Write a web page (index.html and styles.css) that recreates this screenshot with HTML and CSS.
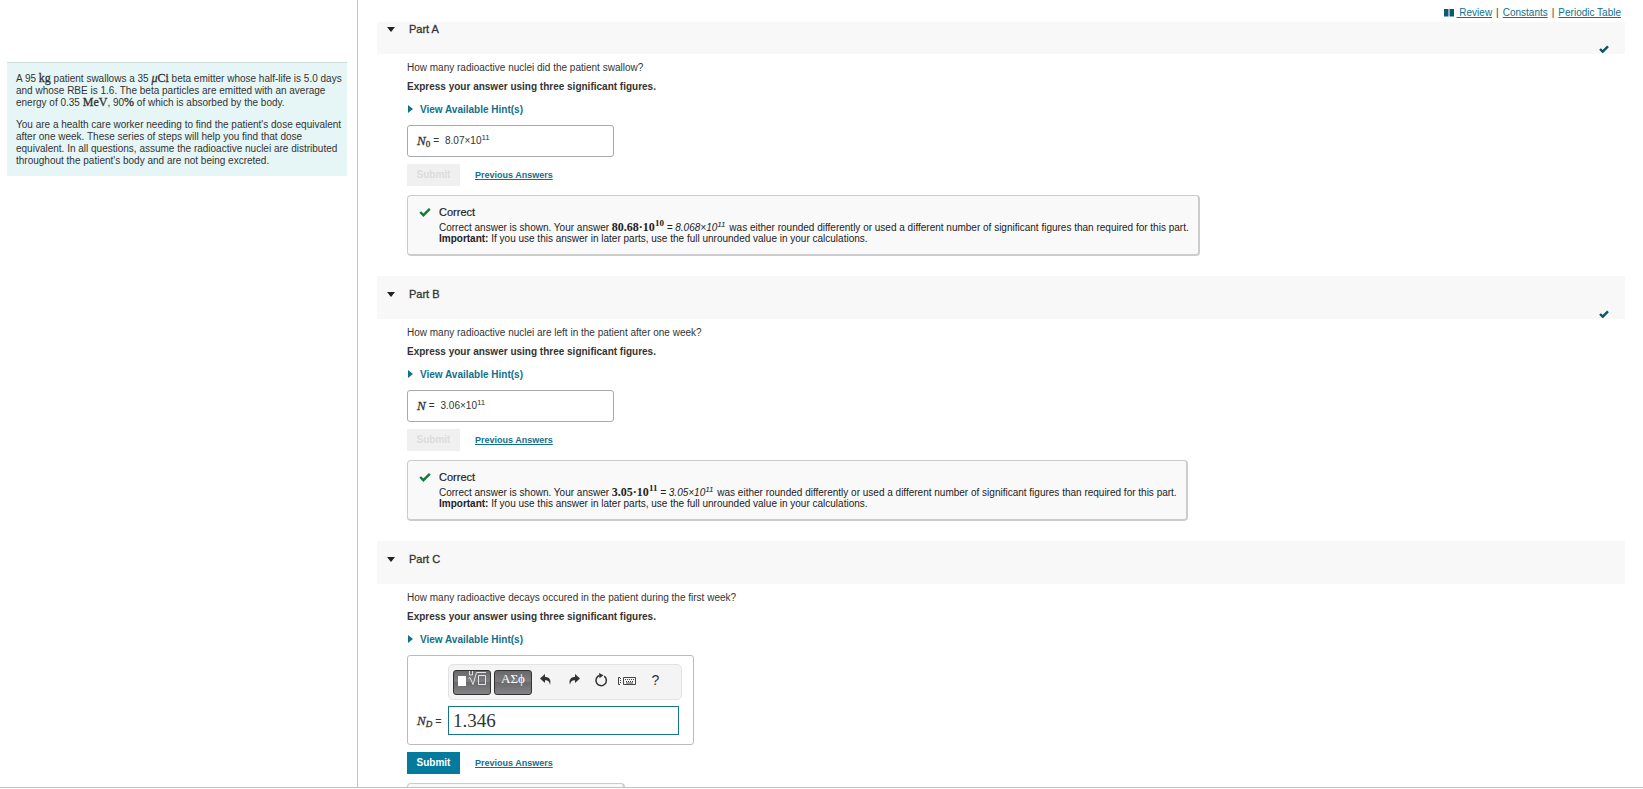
FILE: index.html
```html
<!DOCTYPE html>
<html lang="en">
<head>
<meta charset="utf-8">
<title>Beta emitter dose</title>
<link rel="stylesheet" href="styles.css">
</head>
<body>
<div class="workspace">
  <aside class="sidebar">
    <div class="problem">
      <p>A 95 <span class="math">kg</span> patient swallows a 35 <span class="math"><i>μ</i>Ci</span> beta emitter whose half-life is 5.0 days and whose RBE is 1.6. The beta particles are emitted with an average energy of 0.35 <span class="math">MeV</span>, 90<span class="math">%</span> of which is absorbed by the body.</p>
      <p>You are a health care worker needing to find the patient's dose equivalent after one week. These series of steps will help you find that dose equivalent. In all questions, assume the radioactive nuclei are distributed throughout the patient's body and are not being excreted.</p>
    </div>
  </aside>
  <main class="main">
    <nav class="resources">
      <svg class="book" viewBox="0 0 10 8" aria-hidden="true"><path d="M0 0h4.5v7.5H0zM5.5 0H10v7.5H5.5z"/></svg><a href="#review">&nbsp;Review</a><span class="bar">|</span><a href="#constants">Constants</a><span class="bar">|</span><a href="#table">Periodic Table</a>
    </nav>

    <section class="part">
      <header class="part-head first">
        <svg class="caret" viewBox="0 0 8 5" aria-hidden="true"><path d="M0 0h8L4 5z"/></svg>
        <h2>Part A</h2>
        <svg class="done" viewBox="0 0 10 8" aria-label="Complete"><path d="M1 4l2.7 2.7L9 1.4"/></svg>
      </header>
      <div class="part-body">
        <p class="question">How many radioactive nuclei did the patient swallow?</p>
        <p class="express">Express your answer using three significant figures.</p>
        <button class="hints" type="button"><svg viewBox="0 0 5 8" aria-hidden="true"><path d="M0 0l5 4-5 4z"/></svg>View Available Hint(s)</button>
        <div class="answer"><span class="var"><i>N</i><sub>0</sub></span><span class="eq">=</span><span>8.07×10<sup>11</sup></span></div>
        <div class="actions"><button class="submit" type="button" disabled>Submit</button><a href="#previous-a">Previous Answers</a></div>
        <div class="feedback">
          <svg class="tick" viewBox="0 0 12 10" aria-hidden="true"><path d="M1.2 5l3.2 3.2 6.4-6.4"/></svg>
          <div>
            <h3>Correct</h3>
            <p>Correct answer is shown. Your answer <span class="value">80.68·10<sup>10</sup></span> <i class="rounded">= 8.068×10<sup>11</sup></i> was either rounded differently or used a different number of significant figures than required for this part.</p>
            <p><b>Important:</b> If you use this answer in later parts, use the full unrounded value in your calculations.</p>
          </div>
        </div>
      </div>
    </section>

    <section class="part">
      <header class="part-head">
        <svg class="caret" viewBox="0 0 8 5" aria-hidden="true"><path d="M0 0h8L4 5z"/></svg>
        <h2>Part B</h2>
        <svg class="done" viewBox="0 0 10 8" aria-label="Complete"><path d="M1 4l2.7 2.7L9 1.4"/></svg>
      </header>
      <div class="part-body">
        <p class="question">How many radioactive nuclei are left in the patient after one week?</p>
        <p class="express">Express your answer using three significant figures.</p>
        <button class="hints" type="button"><svg viewBox="0 0 5 8" aria-hidden="true"><path d="M0 0l5 4-5 4z"/></svg>View Available Hint(s)</button>
        <div class="answer"><span class="var"><i>N</i></span><span class="eq">=</span><span>3.06×10<sup>11</sup></span></div>
        <div class="actions"><button class="submit" type="button" disabled>Submit</button><a href="#previous-b">Previous Answers</a></div>
        <div class="feedback">
          <svg class="tick" viewBox="0 0 12 10" aria-hidden="true"><path d="M1.2 5l3.2 3.2 6.4-6.4"/></svg>
          <div>
            <h3>Correct</h3>
            <p>Correct answer is shown. Your answer <span class="value">3.05·10<sup>11</sup></span> <i class="rounded">= 3.05×10<sup>11</sup></i> was either rounded differently or used a different number of significant figures than required for this part.</p>
            <p><b>Important:</b> If you use this answer in later parts, use the full unrounded value in your calculations.</p>
          </div>
        </div>
      </div>
    </section>

    <section class="part">
      <header class="part-head">
        <svg class="caret" viewBox="0 0 8 5" aria-hidden="true"><path d="M0 0h8L4 5z"/></svg>
        <h2>Part C</h2>
      </header>
      <div class="part-body">
        <p class="question">How many radioactive decays occured in the patient during the first week?</p>
        <p class="express">Express your answer using three significant figures.</p>
        <button class="hints" type="button"><svg viewBox="0 0 5 8" aria-hidden="true"><path d="M0 0l5 4-5 4z"/></svg>View Available Hint(s)</button>
        <div class="editor">
          <div class="toolbar">
            <button class="palette" type="button" aria-label="Templates"><svg width="30" height="19" viewBox="0 0 30 19"><path fill="#fff" d="M1 5h8v10H1z"/><g fill="none" stroke="#e4e4e6"><path d="M11.500 7.500l1.500-1 3 7 3.500-12H29"/><path d="M21.500 4.500h7v9h-7z"/><path d="M12.500 0v4h3V0"/></g></svg></button>
            <button class="palette greek" type="button">ΑΣϕ</button>
            <button class="tool" type="button" aria-label="Undo"><svg width="12" height="12" viewBox="0 0 12 12"><path fill="#333" d="M0 4.500L5 0v3c4 0 6.500 2.500 5 8C9.500 7.500 8 6.200 5 6.200V9z"/></svg></button>
            <button class="tool" type="button" aria-label="Redo"><svg width="12" height="12" viewBox="0 0 12 12"><path fill="#333" d="M12 4.500L7 0v3C3 3 .5 5.500 2 11c.5-3.500 2-4.800 5-4.800V9z"/></svg></button>
            <button class="tool reset" type="button" aria-label="Reset"><svg width="14" height="14" viewBox="0 0 14 14"><path fill="none" stroke="#333" stroke-width="1.500" d="M10.200 3.200A5.200 5.200 0 1 1 5.500 2.500"/><path fill="#333" d="M5 0l4.500 2.300L5.500 5.300z"/></svg></button>
            <button class="tool keys" type="button" aria-label="Keyboard shortcuts"><svg width="19" height="10" viewBox="0 0 19 10"><g fill="none" stroke="#444"><path d="M3 1.500H1.500v7H3"/><path stroke-dasharray="1 1" d="M3.500 2v6"/><path d="M6.500 1.500h12v7h-12z"/><path stroke-dasharray="1 1" d="M8 3.500h9M9 5.500h8"/><path d="M9 7h7"/></g></svg></button>
            <button class="tool help" type="button" aria-label="Help">?</button>
          </div>
          <label class="var" for="nd"><i>N<sub>D</sub></i> <span class="eq">=</span></label>
          <input class="entry" id="nd" type="text" value="1.346">
        </div>
        <div class="actions"><button class="submit" type="button">Submit</button><a href="#previous-c">Previous Answers</a></div>
        <div class="feedback pending"></div>
      </div>
    </section>
  </main>
</div>
</body>
</html>
```
FILE: styles.css
```css
* { box-sizing: border-box; }
body {
  margin: 0;
  height: 100vh;
  font: 10px/12px "Liberation Sans", Arial, sans-serif;
  color: #333;
  background: #fff;
  overflow: hidden;
}
p, h2, h3 { margin: 0; }
button { font: inherit; border: 0; padding: 0; background: none; }
a { color: #12708a; }
sup, sub { line-height: 0; }

.workspace {
  display: flex;
  height: calc(100vh - 1px);
  border-bottom: 1px solid #bfc3c3;
  overflow: hidden;
}
.sidebar {
  flex: 0 0 358px;
  padding: 62px 10px 0 7px;
  border-right: 1px solid #c0c4c4;
}
.problem {
  padding: 10px 1px 9px 9px;
  border-top: 1px solid #cfdcdb;
  background: #e6f6f6;
}
.problem p + p { margin-top: 10px; }
.math { font: 12px/10px "Liberation Serif", serif; -webkit-text-stroke: 0.3px; }

.main { flex: 1; min-width: 0; padding: 0 18px 0 19px; }
.resources {
  display: flex;
  justify-content: flex-end;
  align-items: center;
  height: 22px;
  padding: 4px 4px 0 0;
}
.book { width: 10px; height: 8px; margin-right: 3px; fill: #0d5a70; }
.bar { margin: 0 4px; }

.part-head {
  display: flex;
  align-items: flex-start;
  height: 43px;
  padding: 12px 16px 0 10px;
  background: #f8f8f8;
}
.part-head.first { height: 32px; padding-top: 1px; }
.part-head h2 { font-size: 11px; font-weight: 400; -webkit-text-stroke: 0.3px; line-height: 13px; margin-left: 14px; }
.caret { width: 8px; height: 5px; margin-top: 4px; fill: #222; }
.done { width: 10px; height: 8px; margin: 22px 0 0 auto; fill: none; stroke: #0d5468; stroke-width: 2.4; }

.part-body { padding: 8px 0 20px 30px; }
.question { margin-bottom: 7px; }
.express { font-weight: 700; }
.hints {
  display: flex;
  align-items: center;
  margin: 11px 0 9px;
  color: #12708a;
  font-weight: 700;
}
.hints svg { width: 5px; height: 8px; margin: 0 7px 2px 1px; fill: #12708a; }
.answer {
  display: flex;
  align-items: center;
  width: 207px;
  height: 32px;
  padding: 0 9px;
  border: 1px solid #aaa;
  border-radius: 3px;
}
.answer sup, .rounded sup { font-size: 8px; }
.var { font: 13px/14px "Liberation Serif", serif; -webkit-text-stroke: 0.3px; }
.var sub { font-size: 9px; vertical-align: -2px; }
.eq { margin: 0 6px 0 3px; font: 10px/12px "Liberation Sans", Arial, sans-serif; }

.actions { display: flex; align-items: center; gap: 15px; margin: 7px 0 9px; }
.actions a { font-weight: 700; font-size: 9px; }
.submit {
  width: 53px;
  height: 22px;
  color: #fff;
  background: #047a9c;
  font-weight: 700;
  font-size: 10px;
}
.submit:disabled { color: #dcdcdc; background: #f0f0f0; }

.feedback {
  display: flex;
  width: fit-content;
  height: 61px;
  padding: 10px 9px 0 11px;
  border: 1px solid #ccc;
  border-width: 1px 2px 2px 1px;
  border-radius: 4px;
  background: #f9f9f9;
  color: #222;
}
.feedback.pending { width: 218px; }
.feedback h3 { font-size: 11px; font-weight: 400; -webkit-text-stroke: 0.2px; line-height: 13px; margin-bottom: 3px; }
.feedback p { line-height: 11px; }
.tick { width: 12px; height: 10px; margin: 1px 8px 0 0; fill: none; stroke: #147a3c; stroke-width: 2.4; }
.value { font: 700 12px/11px "Liberation Serif", serif; }
.value sup { font-size: 9px; }
.rounded { margin-right: 1px; }

.editor {
  display: grid;
  grid-template-columns: 31px 1fr;
  align-items: center;
  row-gap: 6px;
  width: 287px;
  padding: 8px 11px 9px 9px;
  border: 1px solid #bbb;
  border-radius: 3px;
}
.toolbar {
  grid-column: 2;
  display: flex;
  align-items: center;
  height: 36px;
  padding: 0 4px;
  border: 1px solid #e2e2e2;
  border-radius: 5px;
  background: #f4f4f4;
}
.palette {
  display: flex;
  justify-content: center;
  align-items: flex-start;
  width: 38px;
  height: 25px;
  margin-right: 3px;
  border: 1px solid #333;
  border-radius: 3px;
  background: linear-gradient(#69696c, #7d7d80 45%, #69696c 50%, #858588);
  color: #fff;
}
.greek { margin-right: 0; font: 13px/15px "Liberation Serif", serif; }
.tool { display: flex; justify-content: center; align-items: center; width: 28px; height: 28px; padding-bottom: 4px; color: #333; }
.reset { width: 26px; }
.keys { width: 24px; padding-bottom: 2px; }
.help { width: 35px; font-size: 14px; }
.editor .var { white-space: nowrap; }
.editor .eq { margin: 0; }
.entry {
  width: 231px;
  height: 29px;
  padding: 0 4px;
  border: 1px solid #16758d;
  font: 19px/27px "Liberation Serif", serif;
  color: #333;
  outline: 0;
}
```
